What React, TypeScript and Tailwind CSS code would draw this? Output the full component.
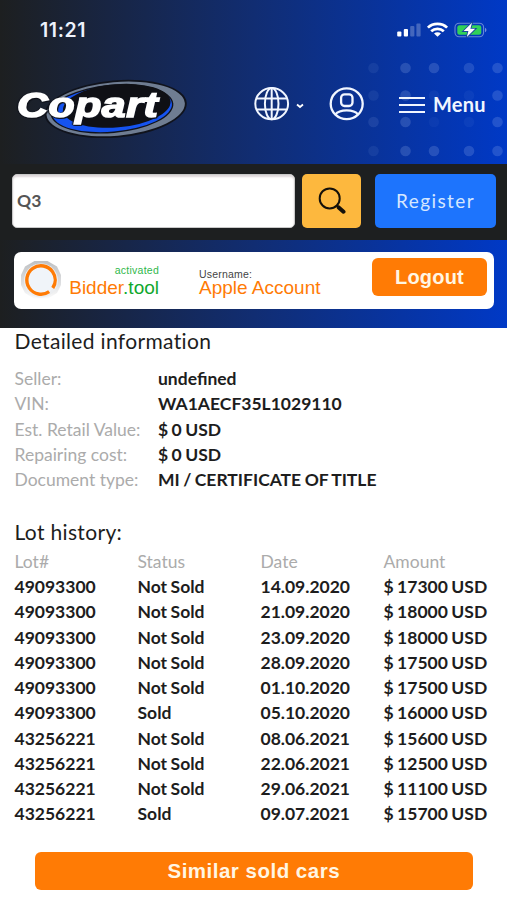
import React from 'react';

interface Lot {
  lot: string;
  status: string;
  date: string;
  amount: string;
}

const DETAILS = [
  { label: 'Seller:', value: 'undefined' },
  { label: 'VIN:', value: 'WA1AECF35L1029110' },
  { label: 'Est. Retail Value:', value: '$ 0 USD' },
  { label: 'Repairing cost:', value: '$ 0 USD' },
  { label: 'Document type:', value: 'MI / CERTIFICATE OF TITLE' },
];

const LOTS: Lot[] = [
  { lot: '49093300', status: 'Not Sold', date: '14.09.2020', amount: '$ 17300 USD' },
  { lot: '49093300', status: 'Not Sold', date: '21.09.2020', amount: '$ 18000 USD' },
  { lot: '49093300', status: 'Not Sold', date: '23.09.2020', amount: '$ 18000 USD' },
  { lot: '49093300', status: 'Not Sold', date: '28.09.2020', amount: '$ 17500 USD' },
  { lot: '49093300', status: 'Not Sold', date: '01.10.2020', amount: '$ 17500 USD' },
  { lot: '49093300', status: 'Sold', date: '05.10.2020', amount: '$ 16000 USD' },
  { lot: '43256221', status: 'Not Sold', date: '08.06.2021', amount: '$ 15600 USD' },
  { lot: '43256221', status: 'Not Sold', date: '22.06.2021', amount: '$ 12500 USD' },
  { lot: '43256221', status: 'Not Sold', date: '29.06.2021', amount: '$ 11100 USD' },
  { lot: '43256221', status: 'Sold', date: '09.07.2021', amount: '$ 15700 USD' },
];

// Opacity of every dot in the header pattern, row by row
const DOT_X = [5.5, 37.5, 66, 101, 129.5];
const DOT_Y = [6, 33.5, 60, 89];
const DOT_OPACITY = [
  [0.07, 0.17, 0.17, 0.15, 0.17],
  [0.07, 0.17, 0.05, 0.05, 0.17],
  [0.1, 0.17, 0.04, 0.05, 0.17],
  [0.07, 0.17, 0.17, 0.17, 0.17],
];

const DotPattern = () => (
  <svg className="absolute left-[368px] top-[62px]" width="139" height="96" viewBox="0 0 139 96">
    {DOT_Y.map((y, row) =>
      DOT_X.map((x, col) => (
        <circle key={`${row}-${col}`} cx={x} cy={y} r="5.3" fill="#c8dcff" opacity={DOT_OPACITY[row][col]} />
      ))
    )}
  </svg>
);

const StatusIcons = () => (
  <svg width="92" height="18" viewBox="0 0 92 18">
    {/* Signal */}
    <rect x="1.2" y="11.5" width="4.2" height="5" rx="1" fill="#fff" />
    <rect x="7.8" y="9" width="4.2" height="7.5" rx="1" fill="#fff" />
    <rect x="14.2" y="6" width="4.2" height="10.5" rx="1" fill="#fff" opacity="0.25" />
    <rect x="20.4" y="3.5" width="4.2" height="13" rx="1" fill="#fff" opacity="0.25" />
    {/* Wi-Fi */}
    <g fill="none" stroke="#fff" strokeWidth="2.7">
      <path d="M31.9 7.6C37 2.6 46 2.6 51.1 7.6" />
      <path d="M35.2 11.2C38.6 8 44.4 8 47.8 11.2" />
    </g>
    <path d="M38 13.4C39.8 12 43.2 12 45 13.4L41.5 16.8Z" fill="#fff" />
    {/* Battery */}
    <rect x="59" y="3.2" width="28.6" height="13.6" rx="4.2" fill="none" stroke="#fff" strokeWidth="1.1" opacity="0.4" />
    <path d="M89 7.8C91 8.6 91 11.4 89 12.2Z" fill="#fff" opacity="0.45" />
    <rect x="61.3" y="5.2" width="24" height="9.6" rx="2.3" fill="#31d158" />
    <path d="M76 2.8L67.6 11H72.4L70.8 17L79.2 8.8H74.4Z" fill="#fff" stroke="#15479c" strokeWidth="1.8" paintOrder="stroke" />
  </svg>
);

const CopartLogo = () => (
  <svg width="174" height="62" viewBox="14 78 174 62">
    <g transform="rotate(-5 115 109)">
      <ellipse cx="115.7" cy="109" rx="71.3" ry="28.6" fill="#10131c" />
      <ellipse cx="115.7" cy="109" rx="69.4" ry="26.8" fill="#6f7d92" />
      <ellipse cx="112" cy="108.6" rx="61.6" ry="24.2" fill="#10131c" />
      <ellipse cx="112" cy="108.6" rx="60.2" ry="22.8" fill="#1553f0" />
      <ellipse cx="117" cy="106" rx="54" ry="21.6" fill="#0f1015" />
    </g>
    {/* White stroke thickens the letters, the shadows give the dark rim */}
    <text
      className="[filter:drop-shadow(1px_1px_0_#10131c)_drop-shadow(-1px_0_0_#10131c)]"
      transform="translate(17 116.5) scale(1.22 1)"
      fontFamily="Liberation Sans, Arial, sans-serif"
      fontSize="35"
      fontWeight="700"
      fontStyle="italic"
      letterSpacing="0.5"
      fill="#fff"
      stroke="#fff"
      strokeWidth="1.6"
    >
      Copart
    </text>
  </svg>
);

const GlobeIcon = () => (
  <svg width="36" height="36" viewBox="0 0 36 36" fill="none" stroke="#f1f6ff" strokeWidth="2">
    <ellipse cx="17.7" cy="17.7" rx="16.4" ry="15.6" />
    <ellipse cx="17.7" cy="17.7" rx="6.8" ry="15.6" />
    <path d="M17.7 2V33.5M3 12.6H32.5M3 23.4H32.5" />
  </svg>
);

const UserIcon = () => (
  <svg width="36" height="36" viewBox="0 0 36 36" fill="none" stroke="#f1f6ff" strokeWidth="2.3">
    <ellipse cx="17.7" cy="17.7" rx="16" ry="15.4" />
    <rect x="12.1" y="8.4" width="11.4" height="11.6" rx="3.4" />
    <path d="M6.3 28.6C8.9 25.2 12.9 24.4 17.7 24.4C22.5 24.4 26.5 25.2 29.1 28.6" />
  </svg>
);

const SearchIcon = () => (
  <svg width="28" height="28" viewBox="0 0 28 28" fill="none" stroke="#15110a">
    <circle cx="11.7" cy="11.4" r="10" strokeWidth="2" />
    <path d="M18.6 18.3L21 20.6" strokeWidth="2" />
    <path d="M20.7 20.4L25.5 24.7" strokeWidth="4" strokeLinecap="round" />
  </svg>
);

const BidderIcon = () => (
  <svg width="42" height="40" viewBox="0 0 42 40" fill="none">
    <defs>
      <linearGradient id="knob" x1="0" y1="0" x2="0" y2="1">
        <stop offset="0" stopColor="#bfc1c3" />
        <stop offset="0.6" stopColor="#dedfe1" />
        <stop offset="1" stopColor="#fbfbfb" />
      </linearGradient>
    </defs>
    <path d="M14.5 1H27.5L37 6.5L41 15V25L37 33L28 38.5H14L5 33L1 25V15L5 6.5Z" fill="url(#knob)" />
    <circle cx="21" cy="20.5" r="17" fill="#eceef1" />
    <circle cx="21" cy="20" r="14.2" fill="#f0f4f9" stroke="#ff7b05" strokeWidth="3.4" strokeDasharray="83.5 5.72" transform="rotate(55 21 20)" />
  </svg>
);

export default function App() {
  return (
    <div className="h-[900px] w-[507px] overflow-hidden bg-white font-['Lato',sans-serif] text-[#1d1d1d]">
      {/* Header */}
      <div className="h-[327.5px] bg-linear-to-r/srgb from-[#1d1f20] via-[#112d72] via-50% to-[#0039c6]">
        <header className="relative h-[164px]">
          <DotPattern />
          <div className="relative flex h-[62px] items-start justify-between pl-[40px] pr-[19px] pt-[20px]">
            <span className="font-['Inter',sans-serif] text-[19.5px] font-semibold leading-[21px] tracking-[0.6px] text-[#edf2fc]">11:21</span>
            <StatusIcons />
          </div>
          <div className="relative flex h-[84px] items-center pl-[14px]">
            <div className="pt-[10px]">
              <CopartLogo />
            </div>
            <div className="ml-[66px] flex items-center">
              <GlobeIcon />
              <svg className="ml-[6px] mt-[4px]" width="8" height="6" viewBox="0 0 8 6" fill="none" stroke="#fff" strokeWidth="1.8">
                <path d="M1 1.5L4 4L7 1.5" />
              </svg>
            </div>
            <div className="ml-[25px]">
              <UserIcon />
            </div>
            <button className="ml-[34px] flex items-center gap-[8px]">
              <svg width="26" height="17" viewBox="0 0 26 17" stroke="#f1f6ff" strokeWidth="2">
                <path d="M0 2H26M0 9H26M0 16H26" />
              </svg>
              <span className="text-[20px] font-bold leading-[24px] tracking-[0.2px] text-[#f1f6ff]">Menu</span>
            </button>
          </div>
        </header>

        {/* Search */}
        <div className="flex h-[75.5px] items-start bg-[#1d1f20] pl-[12px] pt-[10px]">
          <div className="flex h-[54px] w-[283px] items-center rounded-[5px] border border-[#c9c9c9] bg-white pl-[4px] text-[17.5px] font-bold text-[#555] shadow-[inset_0_2px_2px_#ddd6d8]">
            Q3
          </div>
          <button className="ml-[7px] flex h-[54px] w-[59px] items-center justify-center rounded-[5px] bg-[#fdb83e]">
            <SearchIcon />
          </button>
          <button className="ml-[14px] h-[54px] w-[121px] rounded-[5px] bg-[#1d74fd] text-[19px] tracking-[1.4px] text-[#d5e7ff]">
            Register
          </button>
        </div>

        {/* Account */}
        <div className="px-[14px] pt-[12px] font-['Liberation_Sans',Arial,sans-serif]">
          <div className="flex h-[57px] w-[479.5px] items-start rounded-[7px] bg-white pl-[6px]">
            <div className="mt-[8.5px]">
              <BidderIcon />
            </div>
            <div className="ml-[4px] mt-[12px] w-[93px] text-right">
              <div className="text-[10.5px] leading-[12px] tracking-[0.25px] text-[#2fb84b]">activated</div>
              <div className="whitespace-nowrap text-[19px] leading-[23px] text-[#ff7b05]">
                Bidder<span className="text-[#0fa82d]">.tool</span>
              </div>
            </div>
            <div className="ml-[40px] mt-[17px] w-[173px]">
              <div className="text-[10.5px] leading-[11px] tracking-[0.2px] text-[#444]">Username:</div>
              <div className="text-[19px] leading-[15px] text-[#ff7b05]">Apple Account</div>
            </div>
            <button className="mt-[6.5px] h-[38px] w-[115px] rounded-[6px] bg-[#ff7b05] text-[20px] font-bold tracking-[0.2px] text-[#fff6e4]">
              Logout
            </button>
          </div>
        </div>
      </div>

      {/* Details */}
      <section className="pl-[14.5px]">
        <h2 className="h-[38.5px] text-[21px] leading-[25px] tracking-[0.34px]">Detailed information</h2>
        <div className="text-[17.5px] leading-[25.25px]">
          {DETAILS.map((item) => (
            <div key={item.label} className="flex">
              <span className="w-[143.5px] text-[#ababab]">{item.label}</span>
              <span className="font-bold [word-spacing:-0.8px]">{item.value}</span>
            </div>
          ))}
        </div>
      </section>

      {/* Lot history */}
      <section className="mt-[26.5px] pl-[14.5px]">
        <h2 className="h-[30px] text-[21px] leading-[26px] tracking-[0.34px]">Lot history:</h2>
        <div className="text-[17.5px] leading-[25.25px]">
          <div className="grid grid-cols-[repeat(4,123px)] text-[#ababab]">
            <span>Lot#</span>
            <span>Status</span>
            <span>Date</span>
            <span>Amount</span>
          </div>
          {LOTS.map((row) => (
            <div key={row.date} className="grid grid-cols-[repeat(4,123px)] whitespace-nowrap font-bold [word-spacing:-0.8px]">
              <span>{row.lot}</span>
              <span>{row.status}</span>
              <span>{row.date}</span>
              <span>{row.amount}</span>
            </div>
          ))}
        </div>
      </section>

      <button className="ml-[34.5px] mt-[25.5px] block h-[38px] w-[438.5px] rounded-[6px] bg-[#ff7b05] font-['Liberation_Sans',Arial,sans-serif] text-[20.5px] font-bold tracking-[0.5px] text-[#fff6e4]">
        Similar sold cars
      </button>
    </div>
  );
}
